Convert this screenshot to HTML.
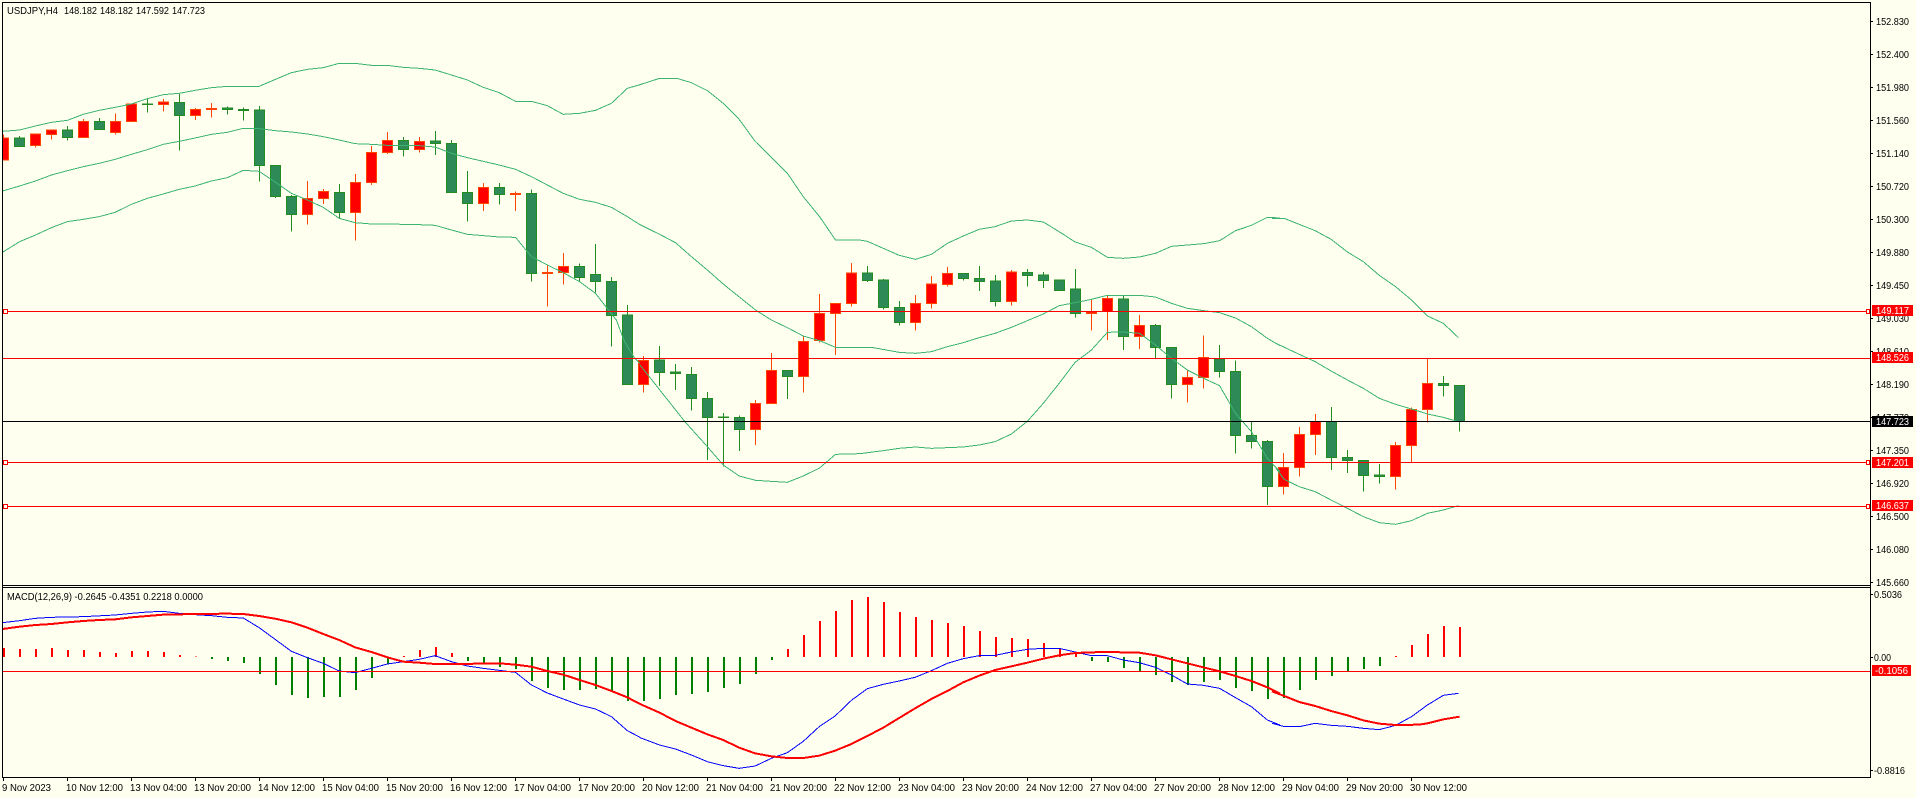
<!DOCTYPE html>
<html lang="en">
<head>
<meta charset="utf-8">
<title>USDJPY,H4</title>
<style>
html,body{margin:0;padding:0;background:#fffff0;width:1916px;height:798px;overflow:hidden}
svg{display:block;position:absolute;left:0;top:0}
text{font-family:"Liberation Sans",sans-serif;font-size:10px;fill:#000}
.w{fill:#fff}
path,polyline,line,rect{vector-effect:non-scaling-stroke;shape-rendering:crispEdges}
polyline{fill:none}
.bb polyline{stroke:#3cb371;stroke-width:1}
</style>
</head>
<body>
<svg width="1916" height="798" viewBox="0 0 1916 798" xmlns="http://www.w3.org/2000/svg">
<defs><clipPath id="c"><rect x="3" y="3" width="1867" height="582"/></clipPath></defs>
<rect x="0" y="0" width="1916" height="798" fill="#fffff0"/>

<g clip-path="url(#c)"><g transform="scale(1 .33333)">
<path fill="none" stroke="#ff4500" stroke-width="1" d="M3.5 403V482M35.5 400V443M51.5 388V418M83.5 357V413M115.5 340V404M131.5 310V365M163.5 297V335M195.5 324V360M211.5 309V353M307.5 543V674M323.5 567V612M355.5 522V722M371.5 438V555M387.5 396V462M419.5 411V458M483.5 549V633M515.5 574V633M547.5 793V920M563.5 759V854M643.5 1068V1178M755.5 1200V1335M771.5 1059V1211M803.5 1010V1178M819.5 882V1028M835.5 910V1065M851.5 789V920M915.5 885V992M931.5 828V926M947.5 801V860M1011.5 810V917M1091.5 900V992M1107.5 888V1020M1139.5 945V1047M1187.5 1108V1208M1203.5 1006V1166M1283.5 1359V1483M1299.5 1281V1430M1315.5 1242V1365M1395.5 1326V1469M1411.5 1223V1387M1427.5 1075V1268"/>
<path fill="none" stroke="#228b22" stroke-width="1" d="M19.5 408V440M67.5 378V422M99.5 354V389M147.5 295V338M179.5 282V452M227.5 320V344M243.5 322V362M259.5 318V545M275.5 496V594M291.5 585V695M339.5 552V655M403.5 411V470M435.5 393V465M451.5 420V578M467.5 513V665M499.5 549V614M531.5 568V845M579.5 790V845M595.5 732V878M611.5 831V1040M627.5 915V1154M659.5 1038V1158M675.5 1092V1170M691.5 1101V1232M707.5 1176V1380M723.5 1239V1400M739.5 1246V1353M787.5 1111V1197M867.5 798V846M883.5 837V929M899.5 903V977M963.5 820V842M979.5 798V873M995.5 825V920M1027.5 807V860M1043.5 816V864M1059.5 840V872M1075.5 807V953M1123.5 886V1050M1155.5 972V1075M1171.5 1042V1196M1219.5 1035V1133M1235.5 1081V1361M1251.5 1264V1346M1267.5 1320V1515M1331.5 1221V1410M1347.5 1350V1419M1363.5 1381V1475M1379.5 1392V1451M1443.5 1128V1190M1459.5 1156V1295"/>
<path fill="#ff0000" stroke="#ff4500" stroke-width="1" d="M-1.5 414h10V480h-10zM30.5 402h10V437h-10zM46.5 390h10V404h-10zM78.5 364h10V413h-10zM110.5 364h10V398h-10zM126.5 312h10V365h-10zM158.5 306h10V314h-10zM190.5 328h10V347h-10zM206.5 325h10V328h-10zM302.5 595h10V644h-10zM318.5 574h10V596h-10zM350.5 547h10V638h-10zM366.5 457h10V548h-10zM382.5 421h10V458h-10zM414.5 424h10V449h-10zM478.5 562h10V611h-10zM510.5 580h10V584h-10zM542.5 817h10V821h-10zM558.5 799h10V818h-10zM638.5 1081h10V1154h-10zM750.5 1210h10V1289h-10zM766.5 1111h10V1211h-10zM798.5 1024h10V1130h-10zM814.5 940h10V1022h-10zM830.5 910h10V941h-10zM846.5 819h10V910h-10zM910.5 910h10V968h-10zM926.5 852h10V910h-10zM942.5 820h10V854h-10zM1006.5 816h10V905h-10zM1086.5 936h10V941h-10zM1102.5 895h10V934h-10zM1134.5 976h10V1010h-10zM1182.5 1132h10V1154h-10zM1198.5 1072h10V1133h-10zM1278.5 1402h10V1460h-10zM1294.5 1303h10V1402h-10zM1310.5 1264h10V1304h-10zM1390.5 1336h10V1429h-10zM1406.5 1228h10V1337h-10zM1422.5 1150h10V1228h-10z"/>
<path fill="#2e8b57" stroke="#228b22" stroke-width="1" d="M14.5 414h10V440h-10zM62.5 390h10V413h-10zM94.5 364h10V389h-10zM142.5 312h10V314h-10zM174.5 307h10V347h-10zM222.5 324h10V329h-10zM238.5 328h10V332h-10zM254.5 330h10V497h-10zM270.5 496h10V590h-10zM286.5 589h10V644h-10zM334.5 577h10V638h-10zM398.5 421h10V449h-10zM430.5 423h10V431h-10zM446.5 430h10V578h-10zM462.5 577h10V611h-10zM494.5 562h10V584h-10zM526.5 580h10V821h-10zM574.5 799h10V833h-10zM590.5 823h10V845h-10zM606.5 844h10V947h-10zM622.5 945h10V1154h-10zM654.5 1080h10V1118h-10zM670.5 1116h10V1121h-10zM686.5 1123h10V1196h-10zM702.5 1195h10V1253h-10zM718.5 1251h10V1253h-10zM734.5 1252h10V1289h-10zM782.5 1111h10V1130h-10zM862.5 819h10V842h-10zM878.5 840h10V923h-10zM894.5 922h10V968h-10zM958.5 820h10V836h-10zM974.5 835h10V845h-10zM990.5 843h10V905h-10zM1022.5 817h10V827h-10zM1038.5 825h10V842h-10zM1054.5 840h10V872h-10zM1070.5 867h10V941h-10zM1118.5 897h10V1010h-10zM1150.5 976h10V1043h-10zM1166.5 1042h10V1154h-10zM1214.5 1077h10V1115h-10zM1230.5 1114h10V1307h-10zM1246.5 1306h10V1325h-10zM1262.5 1324h10V1460h-10zM1326.5 1264h10V1373h-10zM1342.5 1372h10V1382h-10zM1358.5 1381h10V1427h-10zM1374.5 1425h10V1429h-10zM1438.5 1150h10V1157h-10zM1454.5 1156h10V1264h-10z"/>
</g>

<g class="bb">
<g transform="translate(0 0) scale(.40816 .33333)">
<polyline points="6,394 48,390 87,378 126,367 165,361 204,343 243,331 282,322 322,312 361,296 400,284 439,280 478,271 518,263 557,259 635,259 675,238 714,218 753,208 792,203 831,190 870,190 910,196 949,196 988,202 1027,205 1066,210 1106,225 1145,240 1184,262 1223,278 1263,304 1302,304 1341,317 1380,343 1420,340 1459,331 1498,310 1537,265 1568,254"/>
<polyline points="6,573 48,558 87,543 126,525 165,512 204,500 243,490 282,478 322,463 361,449 400,433 439,424 478,414 518,403 557,397 596,385 635,386 675,392 714,396 753,402 792,410 831,420 870,431 910,433 949,436 988,436 1027,437 1066,441 1106,460 1145,473 1184,484 1223,495 1263,508 1302,530 1341,555 1380,580 1420,598 1459,607 1498,622 1537,650 1568,674"/>
<polyline points="6,757 48,725 87,705 126,683 165,665 204,658 243,650 282,637 322,613 361,595 400,582 439,568 478,558 518,543 557,533 596,511 635,514 675,547 714,580 753,600 792,622 831,655 870,668 910,672 949,672 988,673 1027,674 1066,676 1106,690 1145,703 1184,707 1223,711 1263,712 1302,770 1341,795 1380,818 1420,845 1459,880 1478,910 1510,960 1530,1025 1555,1075 1568,1090"/>
</g>
<g transform="translate(640 0) scale(.40816 .33333)">
<polyline points="0,254 48,235 90,235 126,248 165,272 204,310 243,358 282,424 322,472 361,520 400,590 440,650 479,720 538,720 557,724 596,745 635,766 675,778 714,763 753,730 792,708 831,688 870,680 910,663 949,660 988,666 1027,695 1066,726 1106,742 1145,772 1184,775 1224,771 1263,760 1302,739 1381,731 1420,722 1459,692 1498,676 1537,652 1568,654"/>
<polyline points="0,674 48,703 87,728 126,770 165,810 204,852 222,870"/>
</g>
<g transform="translate(1276 0) scale(.40816 .33333)">
<polyline points="-10,655 20,655 57,673 96,692 135,718 175,756 214,785 253,826 293,860 332,900 371,948 410,970 447,1013"/>
</g>
<g transform="translate(640 290) scale(.40816 .33333)">
<polyline points="222,0 283,60 322,90 361,113 400,138 440,152 479,172 567,172 635,187 675,190 714,185 753,170 792,158 831,143 870,130 910,112 949,92 988,72 1027,47 1066,38 1106,28 1145,16 1224,16 1263,21 1302,40 1341,55 1381,62 1420,68 1459,84 1498,110 1537,145 1568,167"/>
<polyline points="0,225 55,310 110,395 165,470 204,525 243,558 283,571 361,577 400,558 440,534 479,493 538,491 596,482 635,475 675,471 714,475 792,471 831,465 870,455 910,432 949,394 988,340 1027,280 1066,217 1106,180 1145,127 1184,126 1224,130 1263,165 1302,205 1341,240 1381,265 1420,287 1459,370 1498,425 1537,505 1568,545"/>
</g>
<g transform="translate(1276 290) scale(.40816 .33333)">
<polyline points="0,160 57,193 96,215 135,243 175,270 214,295 253,325 293,343 332,357 371,372 410,382 447,395"/>
<polyline points="0,535 20,568 57,590 96,605 135,630 175,655 214,680 253,698 293,703 332,692 371,670 410,660 447,647"/>
</g>
</g>
</g>

<!-- horizontal levels -->
<g stroke="#ff0000" stroke-width="1">
<path d="M3 311.5H1870M3 358.5H1870M3 462.5H1870M3 506.5H1870"/>
</g>
<path d="M3 421.5H1870" stroke="#000" stroke-width="1"/>
<g fill="#fffff0" stroke="#ff0000" stroke-width="1">
<rect x="3.5" y="309.5" width="4" height="4"/><rect x="3.5" y="460.5" width="4" height="4"/><rect x="3.5" y="504.5" width="4" height="4"/>
<rect x="1866.5" y="309.5" width="3" height="4"/><rect x="1866.5" y="460.5" width="3" height="4"/><rect x="1866.5" y="504.5" width="3" height="4"/>
</g>

<!-- MACD -->
<g transform="translate(0 580) scale(1 .33333)">
<path fill="none" stroke="#ff0000" stroke-width="2" d="M4 231V204M20 231V207M36 231V207M52 231V204M68 231V210M84 231V210M100 231V216M116 231V219M132 231V213M148 231V213M164 231V216M180 231V225M196 231V229M404 231V228M420 231V210M436 231V201M452 231V219M788 231V207M804 231V165M820 231V123M836 231V93M852 231V60M868 231V51M884 231V66M900 231V96M916 231V111M932 231V120M948 231V129M964 231V138M980 231V153M996 231V171M1012 231V174M1028 231V177M1044 231V189M1060 231V204M1076 231V219M1396 231V228M1412 231V195M1428 231V162M1444 231V138M1460 231V141"/>
<path fill="none" stroke="#008000" stroke-width="2" d="M212 231V237M228 231V243M244 231V249M260 231V282M276 231V315M292 231V345M308 231V354M324 231V351M340 231V351M356 231V330M372 231V294M388 231V252M468 231V243M484 231V252M500 231V261M516 231V267M532 231V303M548 231V324M564 231V330M580 231V330M596 231V327M612 231V336M628 231V363M644 231V363M660 231V357M676 231V345M692 231V342M708 231V336M724 231V324M740 231V312M756 231V282M772 231V240M1092 231V243M1108 231V246M1124 231V264M1140 231V273M1156 231V285M1172 231V306M1188 231V315M1204 231V306M1220 231V300M1236 231V324M1252 231V333M1268 231V357M1284 231V354M1300 231V330M1316 231V300M1332 231V288M1348 231V274M1364 231V267M1380 231V258"/>
</g>
<g transform="translate(0 580) scale(.40816 .33333)" stroke="#0000ff" stroke-width="1">
<polyline points="6,128 48,122 87,115 126,112 204,110 282,105 322,100 361,96 400,94 439,100 478,104 518,107 557,112 596,114 635,143 674,178 714,214 753,233 792,250 831,273 870,278 910,265 949,252 988,245 1027,238 1066,227 1106,245 1145,258 1184,265 1223,271 1263,277 1302,315 1341,339 1380,357 1420,375 1459,387 1498,410 1537,452 1568,472"/>
</g>
<g transform="translate(640 580) scale(.40816 .33333)" stroke="#0000ff" stroke-width="1">
<polyline points="0,473 48,495 87,507 126,525 165,545 204,557 243,565 282,558 322,535 361,518 400,484 439,440 478,408 518,361 557,326 596,313 635,303 674,292 714,272 753,250 792,236 831,227 870,226 910,216 949,208 988,205 1027,205 1066,216 1106,227 1145,227 1184,240 1223,248 1263,262 1302,285 1341,312 1380,316 1420,325 1459,353 1498,380 1537,420 1568,435"/>
</g>
<g transform="translate(1276 580) scale(.40816 .33333)" stroke="#0000ff" stroke-width="1">
<polyline points="-10,430 18,439 57,440 96,430 135,436 175,439 214,445 253,449 293,436 332,410 371,375 410,346 447,340"/>
</g>
<g transform="translate(0 580) scale(.40816 .33333)" stroke="#ff0000" stroke-width="2">
<polyline points="6,147 48,140 87,135 126,132 165,127 204,123 243,120 282,118 322,112 361,108 400,104 439,103 478,102 557,101 596,102 635,108 674,116 714,127 753,143 792,162 831,180 870,202 910,216 949,232 988,245 1027,248 1066,252 1145,252 1184,250 1223,250 1263,254 1302,260 1341,273 1380,284 1420,300 1459,315 1498,333 1537,352 1568,372"/>
</g>
<g transform="translate(640 580) scale(.40816 .33333)" stroke="#ff0000" stroke-width="2">
<polyline points="0,372 48,398 87,423 126,443 165,463 204,480 243,503 282,520 322,529 361,534 400,534 439,527 478,512 518,492 557,468 596,443 635,414 674,385 714,357 753,333 792,307 831,287 870,270 910,259 949,248 988,236 1027,226 1066,219 1106,217 1145,216 1223,218 1263,226 1302,238 1341,250 1380,262 1420,274 1459,288 1498,303 1537,322 1568,341"/>
</g>
<g transform="translate(1276 580) scale(.40816 .33333)" stroke="#ff0000" stroke-width="2">
<polyline points="-10,334 18,347 57,366 96,378 135,393 175,406 214,421 253,431 293,435 350,434 371,430 410,418 450,410"/>
</g>
<path d="M3 671.5H1870" stroke="#ff0000" stroke-width="1"/>

<!-- frame -->
<path fill="none" stroke="#000" stroke-width="1" d="M2.5 2.5H1870.5V777.5H2.5ZM2.5 585.5H1870.5M2.5 587.5H1870.5"/>
<!-- price ticks -->
<path stroke="#000" stroke-width="1" d="M1870 21.5h3M1870 54.5h3M1870 87.5h3M1870 120.5h3M1870 153.5h3M1870 186.5h3M1870 219.5h3M1870 252.5h3M1870 285.5h3M1870 318.5h3M1870 351.5h3M1870 384.5h3M1870 417.5h3M1870 450.5h3M1870 483.5h3M1870 516.5h3M1870 549.5h3M1870 582.5h3M1870 594.5h3M1870 674.5h0M1870 657.5h3M1870 770.5h3"/>
<!-- time ticks -->
<path stroke="#000" stroke-width="1" d="M3.5 777v4M67.5 777v4M131.5 777v4M195.5 777v4M259.5 777v4M323.5 777v4M387.5 777v4M451.5 777v4M515.5 777v4M579.5 777v4M643.5 777v4M707.5 777v4M771.5 777v4M835.5 777v4M899.5 777v4M963.5 777v4M1027.5 777v4M1091.5 777v4M1155.5 777v4M1219.5 777v4M1283.5 777v4M1347.5 777v4M1411.5 777v4"/>

<!-- header text -->
<text x="7" y="14" textLength="51" lengthAdjust="spacingAndGlyphs">USDJPY,H4</text>
<text x="64" y="14" textLength="33" lengthAdjust="spacingAndGlyphs">148.182</text>
<text x="100" y="14" textLength="33" lengthAdjust="spacingAndGlyphs">148.182</text>
<text x="136" y="14" textLength="33" lengthAdjust="spacingAndGlyphs">147.592</text>
<text x="172" y="14" textLength="33" lengthAdjust="spacingAndGlyphs">147.723</text>
<text x="7" y="600" textLength="196" lengthAdjust="spacingAndGlyphs">MACD(12,26,9) -0.2645 -0.4351 0.2218 0.0000</text>

<!-- price axis -->
<g>
<text x="1876" y="25" textLength="33" lengthAdjust="spacingAndGlyphs">152.830</text>
<text x="1876" y="58" textLength="33" lengthAdjust="spacingAndGlyphs">152.400</text>
<text x="1876" y="91" textLength="33" lengthAdjust="spacingAndGlyphs">151.980</text>
<text x="1876" y="124" textLength="33" lengthAdjust="spacingAndGlyphs">151.560</text>
<text x="1876" y="157" textLength="33" lengthAdjust="spacingAndGlyphs">151.140</text>
<text x="1876" y="190" textLength="33" lengthAdjust="spacingAndGlyphs">150.720</text>
<text x="1876" y="223" textLength="33" lengthAdjust="spacingAndGlyphs">150.300</text>
<text x="1876" y="256" textLength="33" lengthAdjust="spacingAndGlyphs">149.880</text>
<text x="1876" y="289" textLength="33" lengthAdjust="spacingAndGlyphs">149.450</text>
<text x="1876" y="322" textLength="33" lengthAdjust="spacingAndGlyphs">149.030</text>
<text x="1876" y="355" textLength="33" lengthAdjust="spacingAndGlyphs">148.610</text>
<text x="1876" y="388" textLength="33" lengthAdjust="spacingAndGlyphs">148.190</text>
<text x="1876" y="421" textLength="33" lengthAdjust="spacingAndGlyphs">147.770</text>
<text x="1876" y="454" textLength="33" lengthAdjust="spacingAndGlyphs">147.350</text>
<text x="1876" y="487" textLength="33" lengthAdjust="spacingAndGlyphs">146.920</text>
<text x="1876" y="520" textLength="33" lengthAdjust="spacingAndGlyphs">146.500</text>
<text x="1876" y="553" textLength="33" lengthAdjust="spacingAndGlyphs">146.080</text>
<text x="1876" y="586" textLength="33" lengthAdjust="spacingAndGlyphs">145.660</text>
</g>
<rect x="1872" y="305" width="41" height="11" fill="#ff0000"/>
<rect x="1872" y="352" width="41" height="11" fill="#ff0000"/>
<rect x="1872" y="416" width="41" height="11" fill="#000"/>
<rect x="1872" y="457" width="41" height="11" fill="#ff0000"/>
<rect x="1872" y="500" width="41" height="11" fill="#ff0000"/>
<rect x="1872" y="665" width="39" height="11" fill="#ff0000"/>
<text class="w" x="1876" y="314" textLength="33" lengthAdjust="spacingAndGlyphs">149.117</text>
<text class="w" x="1876" y="361" textLength="33" lengthAdjust="spacingAndGlyphs">148.526</text>
<text class="w" x="1876" y="425" textLength="33" lengthAdjust="spacingAndGlyphs">147.723</text>
<text class="w" x="1876" y="466" textLength="33" lengthAdjust="spacingAndGlyphs">147.201</text>
<text class="w" x="1876" y="509" textLength="33" lengthAdjust="spacingAndGlyphs">146.637</text>
<text x="1874" y="598" textLength="28" lengthAdjust="spacingAndGlyphs">0.5036</text>
<text x="1874" y="661" textLength="17" lengthAdjust="spacingAndGlyphs">0.00</text>
<text class="w" x="1875" y="674" textLength="33" lengthAdjust="spacingAndGlyphs">-0.1056</text>
<text x="1874" y="774" textLength="31" lengthAdjust="spacingAndGlyphs">-0.8816</text>

<!-- time axis -->
<g>
<text x="2" y="791" textLength="49" lengthAdjust="spacingAndGlyphs">9 Nov 2023</text>
<text x="66" y="791" textLength="57" lengthAdjust="spacingAndGlyphs">10 Nov 12:00</text>
<text x="130" y="791" textLength="57" lengthAdjust="spacingAndGlyphs">13 Nov 04:00</text>
<text x="194" y="791" textLength="57" lengthAdjust="spacingAndGlyphs">13 Nov 20:00</text>
<text x="258" y="791" textLength="57" lengthAdjust="spacingAndGlyphs">14 Nov 12:00</text>
<text x="322" y="791" textLength="57" lengthAdjust="spacingAndGlyphs">15 Nov 04:00</text>
<text x="386" y="791" textLength="57" lengthAdjust="spacingAndGlyphs">15 Nov 20:00</text>
<text x="450" y="791" textLength="57" lengthAdjust="spacingAndGlyphs">16 Nov 12:00</text>
<text x="514" y="791" textLength="57" lengthAdjust="spacingAndGlyphs">17 Nov 04:00</text>
<text x="578" y="791" textLength="57" lengthAdjust="spacingAndGlyphs">17 Nov 20:00</text>
<text x="642" y="791" textLength="57" lengthAdjust="spacingAndGlyphs">20 Nov 12:00</text>
<text x="706" y="791" textLength="57" lengthAdjust="spacingAndGlyphs">21 Nov 04:00</text>
<text x="770" y="791" textLength="57" lengthAdjust="spacingAndGlyphs">21 Nov 20:00</text>
<text x="834" y="791" textLength="57" lengthAdjust="spacingAndGlyphs">22 Nov 12:00</text>
<text x="898" y="791" textLength="57" lengthAdjust="spacingAndGlyphs">23 Nov 04:00</text>
<text x="962" y="791" textLength="57" lengthAdjust="spacingAndGlyphs">23 Nov 20:00</text>
<text x="1026" y="791" textLength="57" lengthAdjust="spacingAndGlyphs">24 Nov 12:00</text>
<text x="1090" y="791" textLength="57" lengthAdjust="spacingAndGlyphs">27 Nov 04:00</text>
<text x="1154" y="791" textLength="57" lengthAdjust="spacingAndGlyphs">27 Nov 20:00</text>
<text x="1218" y="791" textLength="57" lengthAdjust="spacingAndGlyphs">28 Nov 12:00</text>
<text x="1282" y="791" textLength="57" lengthAdjust="spacingAndGlyphs">29 Nov 04:00</text>
<text x="1346" y="791" textLength="57" lengthAdjust="spacingAndGlyphs">29 Nov 20:00</text>
<text x="1410" y="791" textLength="57" lengthAdjust="spacingAndGlyphs">30 Nov 12:00</text>
</g>
</svg>
</body>
</html>
